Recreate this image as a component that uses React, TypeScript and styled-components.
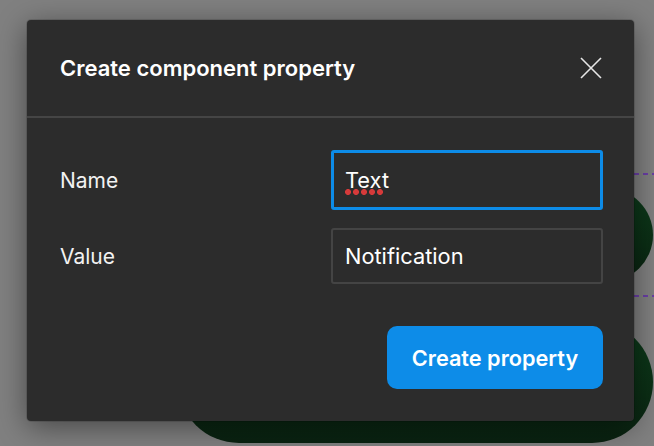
import React from 'react';
import styled, { createGlobalStyle } from 'styled-components';

const GlobalStyle = createGlobalStyle`
  html, body {
    margin: 0;
    padding: 0;
    background: #808080;
  }
  body {
    font-family: Inter, "Noto Sans", "Liberation Sans", sans-serif;
    -webkit-font-smoothing: antialiased;
  }
`;

const Canvas = styled.div`
  position: relative;
  width: 654px;
  height: 446px;
  overflow: hidden;
  background: #808080;
  padding: 20px 0 0 27px;
  box-sizing: border-box;
`;

const Blob = styled.div<{ $top: number; $height: number }>`
  position: absolute;
  left: 178px;
  right: 1px;
  top: ${p => p.$top}px;
  height: ${p => p.$height}px;
  border-radius: ${p => p.$height / 2}px;
  background: linear-gradient(180deg, #0d3b1b 0%, #0b2e15 60%, #0a2211 100%);
`;

const Guide = styled.div<{ $top: number }>`
  position: absolute;
  left: 400px;
  right: 0;
  top: ${p => p.$top}px;
  height: 2px;
  background: repeating-linear-gradient(90deg, #6a3fa6 0 5px, transparent 5px 9px);
`;

const Dialog = styled.div`
  position: relative;
  z-index: 1;
  width: 607px;
  height: 401px;
  background: #2c2c2c;
  border-radius: 4px;
  box-shadow: 0 6px 30px rgba(0, 0, 0, 0.45), 0 0 0 1px rgba(0, 0, 0, 0.12);
  display: flex;
  flex-direction: column;
  color: #fff;
`;

const Header = styled.div`
  height: 96px;
  flex-shrink: 0;
  display: flex;
  align-items: center;
  justify-content: space-between;
  padding: 0 32px 0 33px;
  border-bottom: 2px solid #454545;
`;

const Title = styled.h2`
  margin: 0;
  font-size: 22px;
  font-weight: 600;
`;

const CloseButton = styled.button`
  width: 22px;
  height: 22px;
  padding: 0;
  border: 0;
  background: none;
  display: flex;
  cursor: pointer;
`;

const Body = styled.div`
  flex: 1;
  display: flex;
  flex-direction: column;
  padding: 32px 31px 32px 33px;
`;

const FieldRow = styled.div<{ $height: number }>`
  display: grid;
  grid-template-columns: 1fr 272px;
  align-items: center;
  height: ${p => p.$height}px;
  & + & {
    margin-top: 18px;
  }
`;

const Label = styled.label`
  font-size: 21px;
  font-weight: 400;
  color: #f2f2f2;
`;

const FieldBox = styled.div<{ $focused?: boolean }>`
  box-sizing: border-box;
  height: 100%;
  display: flex;
  align-items: center;
  border-radius: 3px;
  border: ${p => (p.$focused ? '3px solid #0d8ce8' : '2px solid #444444')};
  padding-left: ${p => (p.$focused ? 11 : 12)}px;
  font-size: 21.8px;
  color: #fff;
`;

const Misspelled = styled.span`
  position: relative;
  &::after {
    content: '';
    position: absolute;
    left: 0;
    top: 100%;
    margin-top: -4px;
    width: 40px;
    height: 6px;
    background: radial-gradient(circle at 3px 3px, #d63a3a 2.7px, transparent 3.2px) 0 0 / 8px 6px repeat-x;
  }
`;

const Footer = styled.div`
  margin-top: auto;
  display: flex;
  justify-content: flex-end;
`;

const PrimaryButton = styled.button`
  width: 216px;
  height: 63px;
  border: 0;
  border-radius: 10px;
  background: #0d8ce8;
  color: #fff;
  font-family: inherit;
  font-size: 21.7px;
  font-weight: 600;
  cursor: pointer;
`;

const CloseIcon = () => (
  <svg width="22" height="22" viewBox="0 0 22 22" fill="none">
    <path d="M1 1L21 21M21 1L1 21" stroke="#e6e6e6" strokeWidth="1.6" />
  </svg>
);

export default function App() {
  return (
    <>
      <GlobalStyle />
      <Canvas>
        <Guide $top={173} />
        <Guide $top={295} />
        <Blob $top={188} $height={94} />
        <Blob $top={321} $height={122} />
        <Dialog>
          <Header>
            <Title>Create component property</Title>
            <CloseButton aria-label="Close">
              <CloseIcon />
            </CloseButton>
          </Header>
          <Body>
            <FieldRow $height={60}>
              <Label>Name</Label>
              <FieldBox $focused>
                <Misspelled>Text</Misspelled>
              </FieldBox>
            </FieldRow>
            <FieldRow $height={56}>
              <Label>Value</Label>
              <FieldBox>Notification</FieldBox>
            </FieldRow>
            <Footer>
              <PrimaryButton>Create property</PrimaryButton>
            </Footer>
          </Body>
        </Dialog>
      </Canvas>
    </>
  );
}
